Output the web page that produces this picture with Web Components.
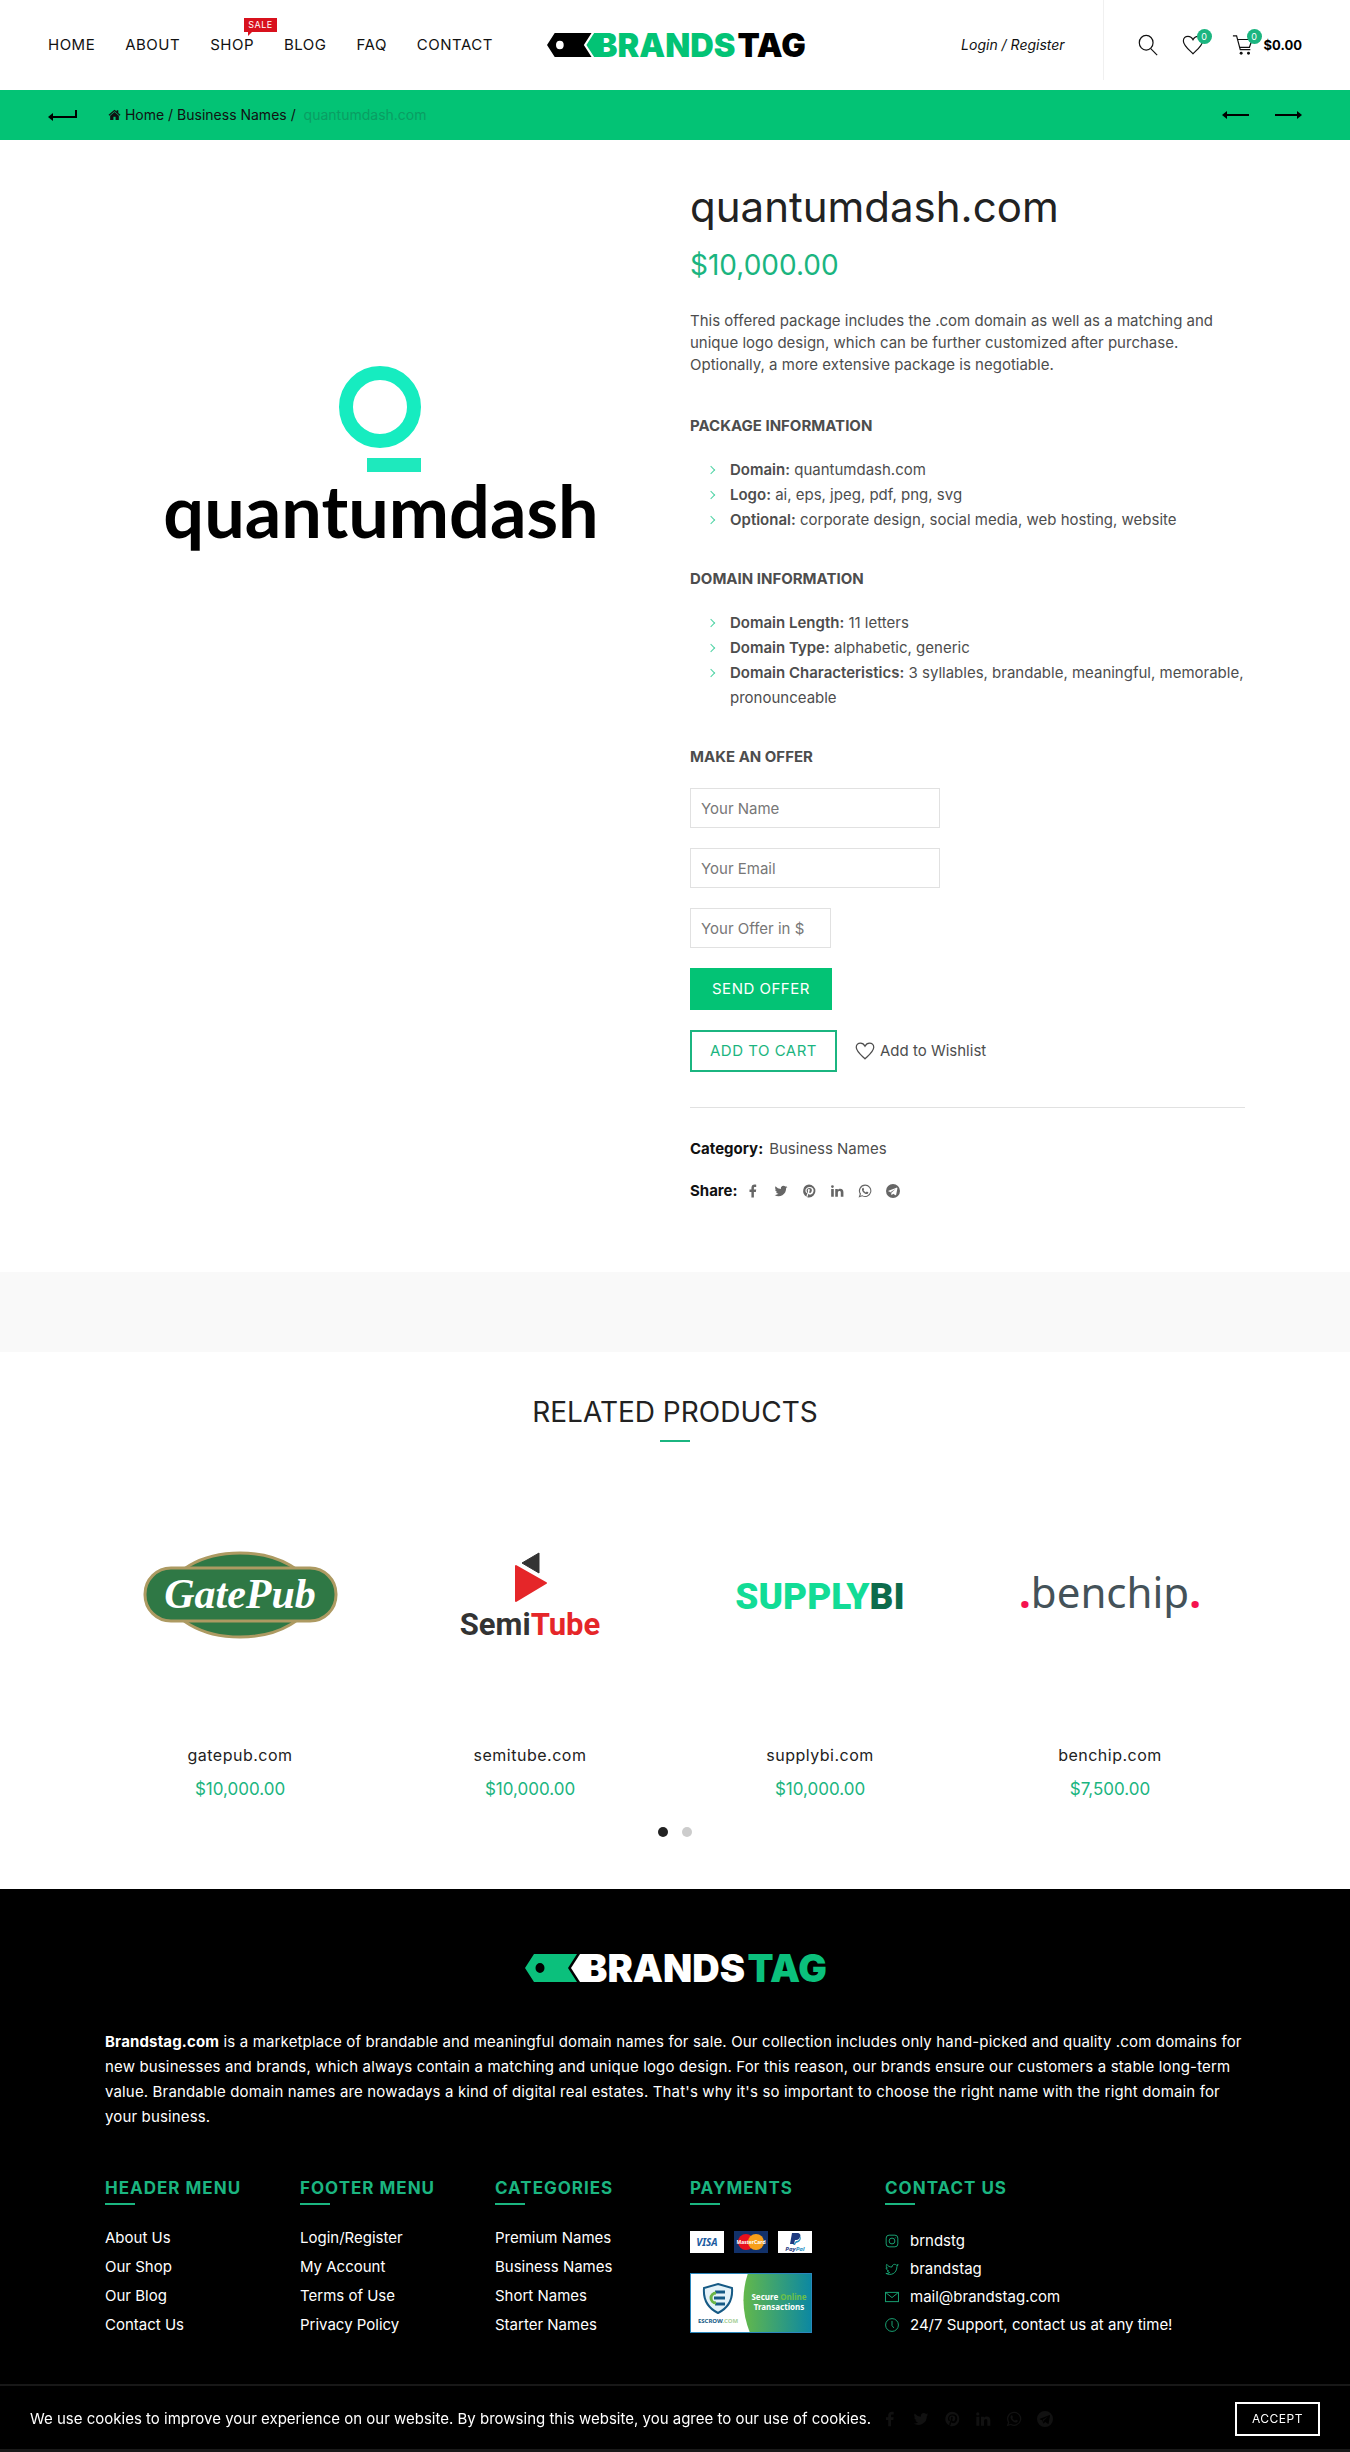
<!DOCTYPE html>
<html lang="en">
<head>
<meta charset="utf-8">
<meta name="viewport" content="width=device-width, initial-scale=1">
<title>quantumdash.com - Brandstag</title>
<style>
    :root {
        --color-green: #03c375;
        --color-accent: #1bb580;
        --color-black: #000;
        --color-dark: #222;
        --color-text: #4d4d4d;
        --color-border: #e1e1e1;
        --color-band: #f9f9f9;
    }

    body {
        margin: 0;
        background: #fff;
        color: var(--color-text);
        font: 15px/22px Inter, "Open Sans", sans-serif;
    }

    info-list b {
        font-weight: 600;
    }
</style>
</head>
<body>
<site-header></site-header>
<bread-crumb></bread-crumb>
<main>
    <product-detail>
        <product-art slot="gallery" name="quantumdash"></product-art>
        <h1 slot="title">quantumdash.com</h1>
        <span slot="price">$10,000.00</span>
        <p slot="intro">This offered package includes the .com domain as well as a matching and unique logo design, which can be further customized after purchase. Optionally, a more extensive package is negotiable.</p>
        <info-list slot="details" heading="PACKAGE INFORMATION">
            <li><b>Domain:</b> quantumdash.com</li>
            <li><b>Logo:</b> ai, eps, jpeg, pdf, png, svg</li>
            <li><b>Optional:</b> corporate design, social media, web hosting, website</li>
        </info-list>
        <info-list slot="details" heading="DOMAIN INFORMATION">
            <li><b>Domain Length:</b> 11 letters</li>
            <li><b>Domain Type:</b> alphabetic, generic</li>
            <li><b>Domain Characteristics:</b> 3 syllables, brandable, meaningful, memorable, pronounceable</li>
        </info-list>
        <offer-form slot="offer"></offer-form>
    </product-detail>
    <related-products>
        <product-card name="gatepub.com" price="$10,000.00"><product-art name="gatepub"></product-art></product-card>
        <product-card name="semitube.com" price="$10,000.00"><product-art name="semitube"></product-art></product-card>
        <product-card name="supplybi.com" price="$10,000.00"><product-art name="supplybi"></product-art></product-card>
        <product-card name="benchip.com" price="$7,500.00"><product-art name="benchip"></product-art></product-card>
    </related-products>
</main>
<site-footer></site-footer>
<cookie-bar>We use cookies to improve your experience on our website. By browsing this website, you agree to our use of cookies.</cookie-bar>

<script>
const BASE = `
    *, *::before, *::after { box-sizing: border-box; }
    a { color: inherit; text-decoration: none; }
    h1, h2, h3, p, ul { margin: 0; padding: 0; }
    ul { list-style: none; }
    button, input { font: inherit; border-radius: 0; margin: 0; }
    svg { display: block; }
`;

class BaseElement extends HTMLElement {
    connectedCallback() {
        if (this.shadowRoot) {
            return;
        }
        const template = document.createElement('template');
        template.innerHTML = `<style>${BASE}</style>${this.render()}`;
        this.attachShadow({ mode: 'open' });
        this.shadowRoot.appendChild(template.content.cloneNode(true));
    }
}

// line icons use the "line" class, the others are filled
const ICONS = {
    search: '<g class="line"><ellipse cx="10" cy="9.500" rx="7.500" ry="8"/><path d="M15 16l7 7"/></g>',
    heart: '<path class="line" d="M12 21.500C8 17.500 1.500 12.500 1.500 7.500 1.500 4.500 3.800 2.500 6.500 2.500c2.400 0 4.300 1.300 5.500 3.700 1.200-2.400 3.100-3.700 5.500-3.700 2.700 0 5 2 5 5 0 5-6.500 10-10.500 14z"/>',
    cart: '<g class="line"><path d="M1 2h4l4 15h11"/><path d="M6 6h16l-3 8.500H8.200"/></g><circle cx="10" cy="21" r="1.600"/><circle cx="18" cy="21" r="1.600"/>',
    home: '<path d="M12 3L1 12.500l1.500 1.600L12 6l9.500 8.100L23 12.500l-4-3.400V4h-3v2.500z"/><path d="M12 7.500l-8 6.800V22h6v-6h4v6h6v-7.700z"/>',
    facebook: '<path d="M17.500 1.200v3.900h-2.300c-1.400 0-1.700.8-1.700 1.900v2.500h4l-.6 4.100h-3.400V23H9.300v-9.400H6V9.500h3.300V6.600C9.300 3.100 11.500 1 14.600 1c1.400 0 2.600.1 2.900.2z"/>',
    twitter: '<path d="M23 5.100a9 9 0 0 1-2.600.7 4.500 4.500 0 0 0 2-2.500 9 9 0 0 1-2.900 1.100 4.500 4.500 0 0 0-7.700 4.100A12.800 12.800 0 0 1 2.500 3.800a4.500 4.500 0 0 0 1.400 6 4.500 4.500 0 0 1-2-.6 4.500 4.500 0 0 0 3.600 4.500 4.500 4.500 0 0 1-2 .1 4.500 4.500 0 0 0 4.200 3.100A9 9 0 0 1 1 18.800 12.800 12.800 0 0 0 20.700 7.400 9 9 0 0 0 23 5.100z"/>',
    pinterest: '<path fill-rule="evenodd" d="M12 1a11 11 0 1 1 0 22 11 11 0 0 1-3.100-.5c.5-.8 1-1.700 1.200-2.600l.8-3c.4.800 1.600 1.400 2.800 1.400 3.700 0 6.200-3.400 6.200-7.600 0-3.300-2.800-5.700-6.600-5.700-4.900 0-7.400 3.300-7.400 6.300 0 1.800.7 3.400 2.100 4 .2.100.4 0 .5-.3l.3-1.100-.1-.4c-.5-.6-.8-1.300-.8-2.300 0-2.600 2-4.500 4.900-4.500 2.600 0 4.100 1.600 4.100 3.700 0 2.700-1.200 5-3 5-1 0-1.700-.8-1.500-1.800.3-1.200.9-2.500.9-3.400 0-2.200-3.200-1.900-3.200 1.100 0 .9.300 1.500.3 1.500L8.100 18.800c-.2 1-.2 2.200 0 3A11 11 0 0 1 12 1z"/>',
    linkedin: '<path d="M2 8.500h4.500V22H2zM4.200 2a2.400 2.400 0 1 1 0 4.800 2.400 2.400 0 0 1 0-4.800zM9 8.500h4.400v1.900c.8-1.300 2.200-2.200 4.100-2.200 3.900 0 5.500 2.300 5.500 6V22h-4.500v-7.200c0-1.800-.6-2.900-2.200-2.900s-2.800 1-2.800 3.100v7H9z"/>',
    whatsapp: '<path fill-rule="evenodd" d="M12.200 1A10.700 10.700 0 0 0 3 17.100L1 23l6.100-1.900A10.700 10.700 0 1 0 12.200 1zm0 1.900a8.800 8.800 0 1 1-4.700 16.200L4 20.200l1.200-3.400A8.800 8.800 0 0 1 12.200 2.900z"/><path d="M8.500 6.500c.5 0 .8 0 1 .5l.9 2.100c.1.400-.9 1.500-.9 1.700.9 1.800 2.200 2.900 4 3.700.3.100 1.300-1.600 1.600-1.500l2.400 1.200c.6.300-.2 2.200-.9 2.700-3.500 2.100-10.400-4.200-9.800-8 .2-1 1.100-2.400 1.700-2.400z"/>',
    telegram: '<path fill-rule="evenodd" d="M12 0a12 12 0 1 1 0 24 12 12 0 0 1 0-24zm6 6.300L4.300 11.700c-.6.300-.5.800.1 1l3.500 1.100 1.500 4.500c.2.500.6.500 1 .1l2-1.900 3.700 2.700c.6.400 1.100.1 1.300-.6l2.100-11c.1-1.100-.5-1.700-1.500-1.300zM8.700 13.300l7.700-4.900-6.100 5.900-.3 2.700z"/>',
    instagram: '<g class="line"><rect x="2" y="2" width="20" height="20" rx="5"/><circle cx="12" cy="12" r="5"/><path d="M17 6.500h1"/></g>',
    bird: '<path class="line" d="M22.500 4.500l-3 1c-2-2.500-7-2-7.500 3C8 9 5 7 3 4c-1.500 3-.5 5 1 6.500L2 10c0 2.500 1.500 4 4 5l-2 .5c1 1.500 2 2.500 4 2.500-2 1.500-4 2-6.500 1.500C10 24 20 20 20.500 8z"/>',
    mail: '<g class="line"><rect x="1" y="4" width="22" height="16"/><path d="M2 5l10 8 10-8"/></g>',
    clock: '<g class="line"><circle cx="12" cy="12" r="11"/><path d="M12 5v8l3 4"/></g>',
};

class UiIcon extends BaseElement {
    render() {
        return `
            <style>
                :host { display: inline-block; width: var(--icon-size, 14px); height: var(--icon-size, 14px); flex: none; }
                svg { width: 100%; height: 100%; fill: currentColor; }
                .line { fill: none; stroke: currentColor; stroke-width: var(--icon-stroke, 1.500); }
            </style>
            <svg viewBox="0 0 24 24" aria-hidden="true">${ICONS[this.getAttribute('name')]}</svg>
        `;
    }
}

class BrandLogo extends BaseElement {
    render() {
        return `
            <style>
                :host { display: block; width: var(--logo-width, 257px); }
                svg { width: 100%; overflow: visible; }
                text { font: 900 38px Inter, sans-serif; }
                .primary { fill: var(--logo-primary, #000); }
                .secondary { fill: var(--logo-secondary, #03c375); }
            </style>
            <svg viewBox="0 0 300 28" role="img" aria-label="Brandstag">
                <path class="primary" fill-rule="evenodd" d="M9 0h43l-9 14 9 14H9L0 14zM15 9a4.500 5 0 1 0 0 10a4.500 5 0 1 0 0-10z"/>
                <path class="secondary" d="M46 14l9-14h6v28h-6z"/>
                <text class="secondary" x="57" y="28">BRANDS</text>
                <text class="primary" x="302" y="28" text-anchor="end">TAG</text>
            </svg>
        `;
    }
}

class SiteHeader extends BaseElement {
    render() {
        return `
            <style>
                :host { display: grid; grid-template-columns: 1fr auto 1fr; align-items: center; height: 90px; padding: 0 48px; color: #111; }
                nav { display: flex; gap: 30px; letter-spacing: 0.5px; }
                .shop { position: relative; }
                .sale { position: absolute; left: 34px; top: -16px; height: 14px; padding: 0 4px; background: #d8111d; color: #fff; font-size: 9px; line-height: 14px; }
                .sale::after { content: ""; position: absolute; left: 4px; top: 14px; border: 2px solid transparent; border-top-color: #d8111d; border-left-color: #d8111d; }
                .tools { display: flex; justify-content: flex-end; align-items: center; height: 100%; }
                .login { font-size: 14px; font-style: italic; }
                .divider { width: 1px; height: 80px; align-self: flex-start; margin: 0 33px 0 38px; background: #f0f0f0; }
                button, .wish, .cart { display: flex; align-items: center; position: relative; border: 0; padding: 0; background: none; color: inherit; --icon-size: 22px; --icon-stroke: 1.300; }
                .wish { margin: 0 28px 0 23px; }
                .badge { position: absolute; left: 15px; top: -5px; width: 15px; height: 15px; border-radius: 50%; background: var(--color-accent); color: #fff; font-size: 9px; line-height: 15px; text-align: center; }
                .total { margin-left: 10px; font-size: 13px; font-weight: 700; color: #000; }
            </style>
            <nav>
                <a href="#">HOME</a><a href="#">ABOUT</a>
                <a href="#" class="shop">SHOP<span class="sale">SALE</span></a>
                <a href="#">BLOG</a><a href="#">FAQ</a><a href="#">CONTACT</a>
            </nav>
            <a href="#"><brand-logo></brand-logo></a>
            <div class="tools">
                <a href="#" class="login">Login / Register</a>
                <span class="divider"></span>
                <button type="button" aria-label="Search"><ui-icon name="search"></ui-icon></button>
                <a href="#" class="wish" aria-label="Wishlist"><ui-icon name="heart"></ui-icon><span class="badge">0</span></a>
                <a href="#" class="cart"><ui-icon name="cart"></ui-icon><span class="badge">0</span><span class="total">$0.00</span></a>
            </div>
        `;
    }
}

class BreadCrumb extends BaseElement {
    render() {
        return `
            <style>
                :host { display: flex; align-items: center; height: 50px; padding: 0 48px; background: var(--color-green); color: #111; font-size: 14px; }
                svg { stroke: #000; stroke-width: 2; fill: none; }
                .head { fill: #000; stroke: none; }
                ui-icon { --icon-size: 13px; vertical-align: -1px; }
                nav { flex: 1; margin-left: 31px; }
                .current { margin-left: 4px; color: #0a9d63; }
                .pager { display: flex; gap: 26px; }
            </style>
            <a href="#" aria-label="Back"><svg width="29" height="14" viewBox="0 0 29 14"><path d="M3 9h25V2"/><path class="head" d="M0 9l5-4v8z"/></svg></a>
            <nav aria-label="Breadcrumb">
                <a href="#"><ui-icon name="home"></ui-icon> Home</a> / <a href="#">Business Names</a> / <span class="current">quantumdash.com</span>
            </nav>
            <div class="pager">
                <a href="#" aria-label="Previous"><svg width="27" height="10" viewBox="0 0 27 10"><path d="M3 5h24"/><path class="head" d="M0 5l5-4v8z"/></svg></a>
                <a href="#" aria-label="Next"><svg width="27" height="10" viewBox="0 0 27 10"><path d="M0 5h24"/><path class="head" d="M27 5l-5-4v8z"/></svg></a>
            </div>
        `;
    }
}

const ART = {
    quantumdash: `
        <svg viewBox="0 0 550 550" role="img" aria-label="quantumdash logo">
            <circle cx="275" cy="223" r="34" fill="none" stroke="#16ecc0" stroke-width="14"/>
            <rect x="262" y="274" width="54" height="14" fill="#1ee9bd"/>
            <text x="276" y="354" text-anchor="middle" font-family="Lato" font-weight="700" font-size="72" fill="#000">quantumdash</text>
        </svg>`,
    gatepub: `
        <svg viewBox="0 0 270 270" role="img" aria-label="gatepub logo">
            <ellipse cx="135" cy="135" rx="71" ry="42" fill="#2f7845" stroke="#ad9a62" stroke-width="3"/>
            <rect x="40" y="108" width="191" height="53" rx="26" fill="#2f7845" stroke="#ad9a62" stroke-width="3"/>
            <text x="135" y="148" text-anchor="middle" font-family="Liberation Serif" font-style="italic" font-weight="700" font-size="42" fill="#fff">GatePub</text>
        </svg>`,
    semitube: `
        <svg viewBox="0 0 270 270" role="img" aria-label="semitube logo">
            <path d="M144 93v20l-17-10z" fill="#333" stroke="#333" stroke-linejoin="round"/>
            <path d="M121 106v35l30-18z" fill="#e52629" stroke="#e52629" stroke-width="2" stroke-linejoin="round"/>
            <text x="135" y="175" text-anchor="middle" font-family="Roboto" font-weight="700" font-size="31" fill="#333">Semi<tspan fill="#e52629">Tube</tspan></text>
        </svg>`,
    supplybi: `
        <svg viewBox="0 0 270 270" role="img" aria-label="supplybi logo">
            <text x="135" y="149" text-anchor="middle" font-family="Roboto" font-weight="900" font-size="37" fill="#12dc96">SUPPLY<tspan fill="#0d6b4b">BI</tspan></text>
        </svg>`,
    benchip: `
        <svg viewBox="0 0 270 270" role="img" aria-label="benchip logo">
            <text x="135" y="148" text-anchor="middle" font-family="Noto Sans" font-size="42" fill="#445259"><tspan fill="#f5124f" font-weight="700">.</tspan>benchip<tspan fill="#f5124f" font-weight="700">.</tspan></text>
        </svg>`,
};

class ProductArt extends BaseElement {
    render() {
        return `
            <style>
                :host { display: block; }
                svg { width: 100%; }
            </style>
            ${ART[this.getAttribute('name')]}
        `;
    }
}

class InfoList extends BaseElement {
    render() {
        return `
            <style>
                :host { display: block; margin-top: 36px; }
                h2 { margin-bottom: 20px; font-size: 15px; line-height: 22px; font-weight: 700; }
                ul { line-height: 25px; }
                ::slotted(li) { display: block; padding-left: 40px; }
                /* chevron in the left gutter of each row */
                ::slotted(li)::before {
                    content: "";
                    display: inline-block;
                    width: 5px;
                    height: 5px;
                    margin: 0 16px 2px -22px;
                    border: solid #4fd3a5;
                    border-width: 1px 1px 0 0;
                    transform: rotate(45deg);
                }
            </style>
            <h2>${this.getAttribute('heading')}</h2>
            <ul><slot></slot></ul>
        `;
    }
}

class ShareLinks extends BaseElement {
    render() {
        const names = ['facebook', 'twitter', 'pinterest', 'linkedin', 'whatsapp', 'telegram'];
        return `
            <style>
                :host { display: inline-flex; align-items: center; gap: var(--share-gap, 14px); }
                a { display: flex; }
            </style>
            ${names.map(name => `<a href="#" aria-label="${name}"><ui-icon name="${name}"></ui-icon></a>`).join('')}
        `;
    }
}

class OfferForm extends BaseElement {
    render() {
        return `
            <style>
                :host { display: block; margin-top: 36px; }
                h2 { margin-bottom: 20px; font-size: 15px; line-height: 22px; font-weight: 700; }
                form { display: flex; flex-direction: column; align-items: flex-start; gap: 20px; }
                input { width: 250px; height: 40px; padding: 0 10px; border: 1px solid var(--color-border); background: #fff; color: #777; }
                input.short { width: 141px; }
                input::placeholder { color: #777; opacity: 1; }
                button { height: 42px; padding: 0 22px; border: 0; background: var(--color-green); color: #fff; letter-spacing: 0.5px; }
            </style>
            <h2>MAKE AN OFFER</h2>
            <form>
                <input type="text" placeholder="Your Name" aria-label="Your Name">
                <input type="email" placeholder="Your Email" aria-label="Your Email">
                <input type="text" class="short" placeholder="Your Offer in $" aria-label="Your Offer in $">
                <button type="button">SEND OFFER</button>
            </form>
        `;
    }
}

class ProductDetail extends BaseElement {
    render() {
        return `
            <style>
                :host { display: grid; grid-template-columns: 1fr 1fr; gap: 30px; padding: 44px 105px 70px; border-bottom: 80px solid var(--color-band); }
                .gallery { padding-right: 5px; }
                ::slotted(h1) { margin: 0; color: var(--color-dark); font-size: 42px; line-height: 46px; font-weight: 400; }
                .price { margin: 15px 0 25px; color: var(--color-accent); font-size: 28px; line-height: 40px; }
                ::slotted(p) { margin: 0; padding-bottom: 3px; line-height: 22px; }
                .actions { display: flex; align-items: center; gap: 18px; margin-top: 20px; padding-bottom: 35px; border-bottom: 1px solid var(--color-border); }
                button { height: 42px; padding: 0 18px; border: 2px solid var(--color-accent); background: #fff; color: var(--color-accent); letter-spacing: 0.5px; }
                .wishlist { display: flex; align-items: center; gap: 5px; --icon-size: 20px; }
                .meta { display: flex; align-items: center; gap: 6px; margin-top: 20px; }
                .meta.first { margin-top: 30px; }
                .meta b { color: #111; }
                share-links { margin-left: 2px; color: #666; }
            </style>
            <div class="gallery"><slot name="gallery"></slot></div>
            <div class="summary">
                <slot name="title"></slot>
                <div class="price"><slot name="price"></slot></div>
                <slot name="intro"></slot>
                <slot name="details"></slot>
                <slot name="offer"></slot>
                <div class="actions">
                    <button type="button">ADD TO CART</button>
                    <a href="#" class="wishlist"><ui-icon name="heart"></ui-icon>Add to Wishlist</a>
                </div>
                <div class="meta first"><b>Category:</b><a href="#">Business Names</a></div>
                <div class="meta"><b>Share:</b><share-links></share-links></div>
            </div>
        `;
    }
}

class ProductCard extends BaseElement {
    render() {
        return `
            <style>
                :host { display: block; padding: 0 10px; text-align: center; }
                h3 { margin: 14px 0 12px; color: var(--color-dark); font-size: 16px; line-height: 22px; font-weight: 400; letter-spacing: 0.5px; }
                .price { color: var(--color-accent); font-size: 17px; }
            </style>
            <slot></slot>
            <h3><a href="#">${this.getAttribute('name')}</a></h3>
            <div class="price">${this.getAttribute('price')}</div>
        `;
    }
}

class RelatedProducts extends BaseElement {
    render() {
        return `
            <style>
                :host { display: block; padding: 40px 95px 52px; }
                h2 { color: var(--color-dark); font-size: 28px; line-height: 40px; font-weight: 400; text-align: center; }
                h2::after { content: ""; display: block; width: 30px; height: 2px; margin: 8px auto 18px; background: var(--color-accent); }
                .cards { display: grid; grid-template-columns: repeat(4, 1fr); }
                .dots { display: flex; justify-content: center; gap: 14px; margin-top: 27px; }
                .dots button { width: 10px; height: 10px; padding: 0; border: 0; border-radius: 50%; background: #ccc; }
                .dots .active { background: var(--color-dark); }
            </style>
            <h2>RELATED PRODUCTS</h2>
            <div class="cards"><slot></slot></div>
            <div class="dots">
                <button type="button" class="active" aria-label="Page 1"></button>
                <button type="button" aria-label="Page 2"></button>
            </div>
        `;
    }
}

class FooterColumn extends BaseElement {
    render() {
        return `
            <style>
                :host { display: block; }
                h3 { color: var(--color-accent); font-size: 17px; line-height: 22px; font-weight: 700; letter-spacing: 1px; white-space: nowrap; }
                h3::after { content: ""; display: block; width: 30px; height: 2px; margin: 4px 0 18px; background: var(--color-accent); }
                ::slotted(a) { display: block; color: #fff; line-height: 29px; text-decoration: none; }
            </style>
            <h3>${this.getAttribute('heading')}</h3>
            <slot></slot>
        `;
    }
}

class PaymentBadges extends BaseElement {
    render() {
        return `
            <style>
                :host { display: block; padding-top: 8px; }
                .cards { display: flex; gap: 10px; margin-bottom: 20px; }
                text { font-family: "Noto Sans", sans-serif; font-weight: 700; }
            </style>
            <div class="cards">
                <svg width="34" height="22" viewBox="0 0 34 22"><rect width="34" height="22" fill="#fff"/><text x="17" y="15" text-anchor="middle" font-size="10" font-style="italic" fill="#1a5a9e">VISA</text></svg>
                <svg width="34" height="22" viewBox="0 0 34 22"><rect width="34" height="22" fill="#12316a"/><circle cx="12" cy="11" r="8" fill="#e8101c"/><circle cx="22" cy="11" r="8" fill="#f79f1a"/><text x="17" y="13" text-anchor="middle" font-size="5" fill="#fff">MasterCard</text></svg>
                <svg width="34" height="22" viewBox="0 0 34 22"><rect width="34" height="22" fill="#fff"/><path d="M14 2h5c3 0 4 2 3 4-1 3-3 3-5 3l-1 4h-4z" fill="#1d3a80"/><path d="M18 10c3 0 4-2 4-5 2 3 0 6-4 7l-1 2h-2z" fill="#2790c3"/><text x="17" y="20" text-anchor="middle" font-size="6" font-style="italic" fill="#1d3a80">Pay<tspan fill="#2790c3">Pal</tspan></text></svg>
            </div>
            <svg width="122" height="60" viewBox="0 0 122 60" role="img" aria-label="Escrow.com Secure Online Transactions">
                <defs><linearGradient id="shade" x2="1" y2="0"><stop stop-color="#63b84b"/><stop offset="1" stop-color="#0b87a3"/></linearGradient></defs>
                <rect width="122" height="60" fill="#fff"/>
                <path d="M58 0h64v60H60q-12-30-2-60z" fill="url(#shade)"/>
                <rect x="0.500" y="0.500" width="121" height="59" fill="none" stroke="#2b87bd"/>
                <path d="M28 11l14 4c1 12-4 20-14 25-10-5-15-13-14-25z" fill="#e4f2f8" stroke="#165a85" stroke-width="2"/>
                <path d="M35 19h-10M35 25h-11M35 31h-10" fill="none" stroke="#165a85" stroke-width="3"/>
                <path d="M26 20a5 5 0 0 0 0 10" fill="none" stroke="#6ab547" stroke-width="3"/>
                <text x="28" y="50" text-anchor="middle" font-size="6" fill="#165a85">ESCROW<tspan fill="#a9cf9a">.COM</tspan></text>
                <text x="89" y="27" text-anchor="middle" font-size="8" fill="#fff">Secure <tspan fill="#6cc04a">Online</tspan></text>
                <text x="89" y="37" text-anchor="middle" font-size="8" fill="#fff">Transactions</text>
            </svg>
        `;
    }
}

class ContactList extends BaseElement {
    render() {
        const rows = [
            ['instagram', 'brndstg'],
            ['bird', 'brandstag'],
            ['mail', 'mail@brandstag.com'],
            ['clock', '24/7 Support, contact us at any time!'],
        ];
        return `
            <style>
                :host { display: block; padding-top: 4px; color: #fff; }
                li { display: flex; align-items: center; gap: 11px; height: 28px; }
                ui-icon { color: var(--color-accent); }
            </style>
            <ul>${rows.map(([icon, text]) => `<li><ui-icon name="${icon}"></ui-icon><span>${text}</span></li>`).join('')}</ul>
        `;
    }
}

class SiteFooter extends BaseElement {
    render() {
        const menus = {
            'HEADER MENU': ['About Us', 'Our Shop', 'Our Blog', 'Contact Us'],
            'FOOTER MENU': ['Login/Register', 'My Account', 'Terms of Use', 'Privacy Policy'],
            'CATEGORIES': ['Premium Names', 'Business Names', 'Short Names', 'Starter Names'],
        };
        const columns = Object.entries(menus).map(([heading, links]) => `
            <footer-column heading="${heading}">${links.map(link => `<a href="#">${link}</a>`).join('')}</footer-column>
        `).join('');
        return `
            <style>
                :host { display: block; padding: 65px 105px 22px; background: var(--color-black); color: #fff; }
                brand-logo { --logo-width: 300px; --logo-primary: #0bc07c; --logo-secondary: #fff; margin: 0 auto 47px; }
                p { line-height: 25px; letter-spacing: 0.01em; margin-bottom: 48px; }
                .columns { display: grid; grid-template-columns: repeat(6, 1fr); gap: 30px; }
                .wide { grid-column: span 2; }
                .bottom { display: grid; grid-template-columns: 1fr 1fr; gap: 30px; margin-top: 72px; }
                share-links { grid-column: 2; justify-self: center; color: #aaa; --icon-size: 16px; --share-gap: 15px; }
            </style>
            <brand-logo></brand-logo>
            <p><b>Brandstag.com</b> is a marketplace of brandable and meaningful domain names for sale. Our collection includes only hand-picked and quality .com domains for new businesses and brands, which always contain a matching and unique logo design. For this reason, our brands ensure our customers a stable long-term value. Brandable domain names are nowadays a kind of digital real estates. That's why it's so important to choose the right name with the right domain for your business.</p>
            <div class="columns">
                ${columns}
                <footer-column heading="PAYMENTS"><payment-badges></payment-badges></footer-column>
                <footer-column heading="CONTACT US" class="wide"><contact-list></contact-list></footer-column>
            </div>
            <div class="bottom"><share-links></share-links></div>
        `;
    }
}

class CookieBar extends BaseElement {
    render() {
        return `
            <style>
                :host { position: fixed; left: 0; right: 0; bottom: 0; display: flex; align-items: center; justify-content: space-between; height: 66px; padding: 0 30px; border-top: 2px solid #181818; background: rgba(0, 0, 0, 0.9); color: #fff; }
                button { height: 34px; padding: 0 15px; border: 2px solid #fff; background: transparent; color: #fff; font-size: 12px; letter-spacing: 0.5px; }
            </style>
            <span><slot></slot></span>
            <button type="button">ACCEPT</button>
        `;
    }
}

customElements.define('ui-icon', UiIcon);
customElements.define('brand-logo', BrandLogo);
customElements.define('site-header', SiteHeader);
customElements.define('bread-crumb', BreadCrumb);
customElements.define('product-art', ProductArt);
customElements.define('info-list', InfoList);
customElements.define('share-links', ShareLinks);
customElements.define('offer-form', OfferForm);
customElements.define('product-detail', ProductDetail);
customElements.define('product-card', ProductCard);
customElements.define('related-products', RelatedProducts);
customElements.define('footer-column', FooterColumn);
customElements.define('payment-badges', PaymentBadges);
customElements.define('contact-list', ContactList);
customElements.define('site-footer', SiteFooter);
customElements.define('cookie-bar', CookieBar);
</script>
</body>
</html>
